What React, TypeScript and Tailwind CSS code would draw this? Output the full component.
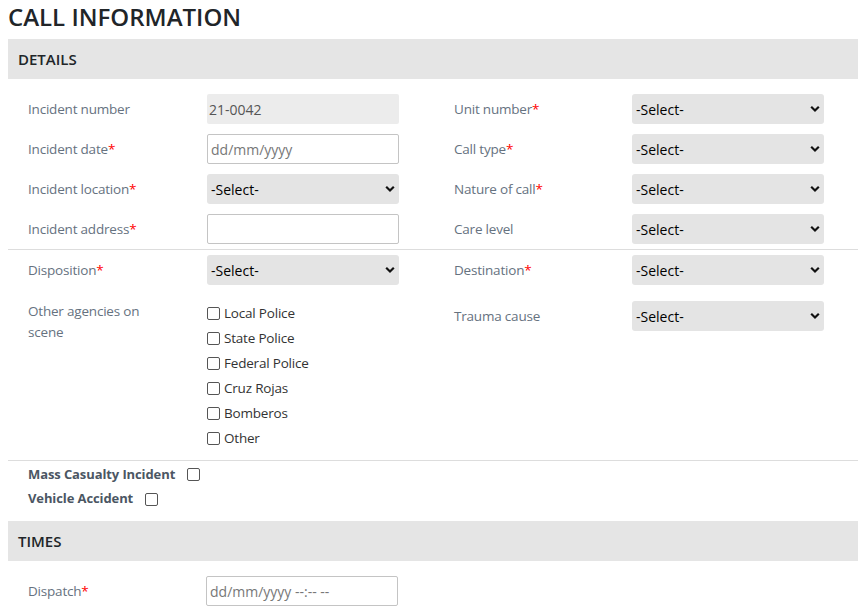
import { ReactNode } from 'react';

const Req = () => <span className="text-[#ff0000]">*</span>;

const Chevron = () => (
  <svg width="10" height="7" viewBox="0 0 10 7" className="pointer-events-none absolute right-[4px] top-1/2 -translate-y-1/2">
    <path d="M1.2 1.3 L5 5 L8.8 1.3" fill="none" stroke="#111" strokeWidth="2.2" />
  </svg>
);

const SelectBox = () => (
  <div className="relative h-[30px] w-[192px]">
    <select className="h-full w-full appearance-none rounded-[3px] bg-[#e4e4e4] pl-[4px] text-[14px] text-black outline-none">
      <option>-Select-</option>
    </select>
    <Chevron />
  </div>
);

const TextBox = ({ placeholder = '' }: { placeholder?: string }) => (
  <input
    type="text"
    placeholder={placeholder}
    className="h-[30px] w-[192px] rounded-[2px] border border-[#c4c4c4] bg-white pl-[3px] text-[14px] text-[#555] placeholder:text-[#777] outline-none"
  />
);

const Row = ({ label, required, children, w = 'w-[179px]' }: { label: string; required?: boolean; children: ReactNode; w?: string }) => (
  <div className="flex items-center">
    <div className={`${w} text-[13.5px] tracking-[-0.2px] text-[#66727f]`}>
      {label}
      {required && <Req />}
    </div>
    {children}
  </div>
);

const SectionHeader = ({ title }: { title: string }) => (
  <div className="flex h-10 items-center bg-[#e5e5e5] pl-[10px] text-[15px] font-semibold text-[#212529]">{title}</div>
);

const Check = ({ label }: { label: string }) => (
  <label className="flex h-[25px] items-center text-[13.5px] tracking-[-0.2px] text-[#333]">
    <input type="checkbox" className="mr-[4px] h-[13px] w-[13px] appearance-none rounded-[2px] border border-[#555] bg-white" />
    {label}
  </label>
);

export default function App() {
  const agencies = ['Local Police', 'State Police', 'Federal Police', 'Cruz Rojas', 'Bomberos', 'Other'];

  return (
    <div className="bg-white px-2 text-[14px] font-['Open_Sans',sans-serif]">
      <h1 className="h-[39px] pt-[1px] text-[24px] font-semibold leading-[32px] text-[#212529]">CALL INFORMATION</h1>

      <SectionHeader title="DETAILS" />

      {/* first block */}
      <div className="grid grid-cols-2 border-b border-[#dddddd] pt-[15px] pb-[5px]">
        <div className="flex flex-col gap-[10px] pl-5">
          <Row label="Incident number">
            <div className="flex h-[30px] w-[192px] items-center rounded-[2px] bg-[#ececec] pl-[2px] text-[#555]">21-0042</div>
          </Row>
          <Row label="Incident date" required>
            <TextBox placeholder="dd/mm/yyyy" />
          </Row>
          <Row label="Incident location" required>
            <SelectBox />
          </Row>
          <Row label="Incident address" required>
            <TextBox />
          </Row>
        </div>
        <div className="flex flex-col gap-[10px] pl-[21px]">
          <Row label="Unit number" required w="w-[178px]">
            <SelectBox />
          </Row>
          <Row label="Call type" required w="w-[178px]">
            <SelectBox />
          </Row>
          <Row label="Nature of call" required w="w-[178px]">
            <SelectBox />
          </Row>
          <Row label="Care level" w="w-[178px]">
            <SelectBox />
          </Row>
        </div>
      </div>

      {/* second block */}
      <div className="grid grid-cols-2 border-b border-[#dddddd] pt-[5px] pb-[9px]">
        <div className="flex flex-col gap-4 pl-5">
          <Row label="Disposition" required>
            <SelectBox />
          </Row>
          <div className="flex items-start">
            <div className="w-[179px] pr-8 text-[13.5px] leading-[21px] tracking-[-0.2px] text-[#66727f]">Other agencies on scene</div>
            <div className="flex flex-col">
              {agencies.map((a) => (
                <Check key={a} label={a} />
              ))}
            </div>
          </div>
        </div>
        <div className="flex flex-col gap-4 pl-[21px]">
          <Row label="Destination" required w="w-[178px]">
            <SelectBox />
          </Row>
          <Row label="Trauma cause" w="w-[178px]">
            <SelectBox />
          </Row>
        </div>
      </div>

      {/* flags */}
      <div className="mb-[10px] flex flex-col pl-5 pt-px text-[13px] font-bold tracking-[-0.1px] text-[#4b5663]">
        <label className="flex h-[25px] items-center">
          Mass Casualty Incident
          <input type="checkbox" className="ml-[12px] h-[13px] w-[13px] appearance-none rounded-[2px] border border-[#555] bg-white" />
        </label>
        <label className="flex h-[24px] items-center">
          Vehicle Accident
          <input type="checkbox" className="ml-[12px] h-[13px] w-[13px] appearance-none rounded-[2px] border border-[#555] bg-white" />
        </label>
      </div>

      <SectionHeader title="TIMES" />

      <div className="pt-[15px] pl-5">
        <Row label="Dispatch" required w="w-[178px]">
          <TextBox placeholder="dd/mm/yyyy --:-- --" />
        </Row>
      </div>
    </div>
  );
}
